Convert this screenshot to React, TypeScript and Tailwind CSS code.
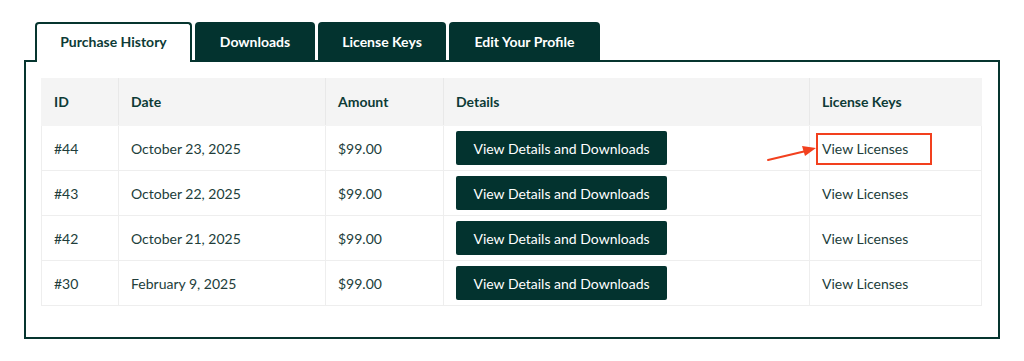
import React from 'react';

const rows = [
  { id: '#44', date: 'October 23, 2025', amount: '$99.00', highlight: true },
  { id: '#43', date: 'October 22, 2025', amount: '$99.00' },
  { id: '#42', date: 'October 21, 2025', amount: '$99.00' },
  { id: '#30', date: 'February 9, 2025', amount: '$99.00' },
];

const tabs = [
  { label: 'Purchase History', w: 'w-[157px]', active: true },
  { label: 'Downloads', w: 'w-[120px]' },
  { label: 'License Keys', w: 'w-[128px]' },
  { label: 'Edit Your Profile', w: 'w-[151px]' },
];

const App: React.FC = () => {
  return (
    <div className="w-[1024px] h-[361px] bg-white pt-[22px] pl-[24px] font-['Lato','Liberation_Sans',sans-serif]">
      <div className="flex gap-[3px] ml-[11px] -mb-[2px] relative z-10">
        {tabs.map(t =>
          t.active ? (
            <div
              key={t.label}
              className={`${t.w} h-[40px] pb-[4px] flex items-center justify-center rounded-t-[4px] border-2 border-b-0 border-[#06352f] bg-white text-[14px] font-bold text-[#0d3b36]`}
            >
              {t.label}
            </div>
          ) : (
            <div
              key={t.label}
              className={`${t.w} h-[40px] pb-[2px] flex items-center justify-center rounded-t-[4px] bg-[#03332f] text-[14px] font-bold text-white`}
            >
              {t.label}
            </div>
          )
        )}
      </div>

      <div className="w-[976px] border-2 border-[#06352f] pt-[16px] px-[15px] pb-[31px]">
        <table className="w-[941px] border-collapse text-[14px] text-[#213d3a]">
          <thead>
            <tr className="h-[47px] bg-[#f4f4f4] text-left font-bold text-[#0d3b36]">
              <th className="w-[77px] px-[12px] pb-[1px] border border-[#f4f4f4] border-r-[#e8e8e8] font-bold">ID</th>
              <th className="w-[207px] px-[12px] pb-[1px] border border-[#f4f4f4] border-r-[#e8e8e8] font-bold">Date</th>
              <th className="w-[118px] px-[12px] pb-[1px] border border-[#f4f4f4] border-r-[#e8e8e8] font-bold">Amount</th>
              <th className="w-[366px] px-[12px] pb-[1px] border border-[#f4f4f4] border-r-[#e8e8e8] font-bold">Details</th>
              <th className="px-[12px] pb-[1px] border border-[#f4f4f4] font-bold">License Keys</th>
            </tr>
          </thead>
          <tbody>
            {rows.map(r => (
              <tr key={r.id} className="h-[45px]">
                <td className="px-[12px] border border-[#eeeeee]">{r.id}</td>
                <td className="px-[12px] border border-[#eeeeee]">{r.date}</td>
                <td className="px-[12px] border border-[#eeeeee]">{r.amount}</td>
                <td className="px-[12px] border border-[#eeeeee]">
                  <button className="w-[211px] h-[34px] rounded-[2px] bg-[#03332f] text-white text-[14px]">
                    View Details and Downloads
                  </button>
                </td>
                <td className="px-[12px] border border-[#eeeeee] relative">
                  View Licenses
                  {r.highlight && (
                    <>
                      <div className="absolute left-[6px] top-[7px] w-[116px] h-[32px] border-2 border-[#f2401e]" />
                      <svg
                        className="absolute left-[-44px] top-[12px]"
                        width="52"
                        height="26"
                        viewBox="0 0 52 26"
                      >
                        <line x1="2" y1="22" x2="40" y2="13" stroke="#f2401e" strokeWidth="2" strokeLinecap="round" />
                        <polygon points="50,10 36,8 39,18" fill="#f2401e" />
                      </svg>
                    </>
                  )}
                </td>
              </tr>
            ))}
          </tbody>
        </table>
      </div>
    </div>
  );
};

export default App;
